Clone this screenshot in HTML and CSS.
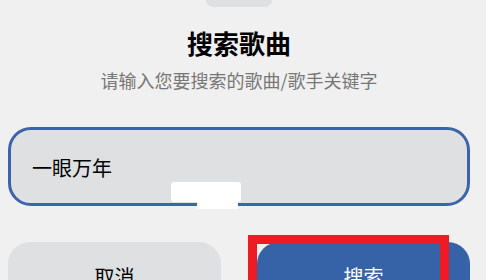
FILE: index.html
```html
<!DOCTYPE html>
<html lang="zh-CN">
<head>
  <meta charset="UTF-8">
  <meta name="viewport" content="width=device-width, initial-scale=1.0">
  <title>搜索歌曲</title>
  <link rel="stylesheet" href="styles.css">
</head>
<body>
  <div class="sheet">
    <div class="handle"></div>
    <h1 class="title">搜索歌曲</h1>
    <p class="hint">请输入您要搜索的歌曲/歌手关键字</p>

    <div class="field">
      <span class="field-text">一眼万年</span>
      <div class="blot blot-top"></div>
      <div class="blot blot-bottom"></div>
    </div>

    <div class="actions">
      <button class="btn btn-cancel">取消</button>
      <button class="btn btn-search">搜索</button>
      <div class="highlight"></div>
    </div>
  </div>
</body>
</html>
```

FILE: styles.css
```css
/* Reset styles */
* {
  margin: 0;
  padding: 0;
  box-sizing: border-box;
}

html, body {
  width: 486px;
  height: 280px;
  overflow: hidden;
}

body {
  font-family: "Noto Sans CJK SC", "Noto Sans", sans-serif;
  background-color: #f0f0f0;
  color: #000;
}

.sheet {
  width: 462px;
  margin-left: 8px;
}

.handle {
  width: 66px;
  height: 7px;
  margin: 0 auto;
  background-color: #dfe0e2;
  border-radius: 0 0 7px 7px;
}

.title {
  margin-top: 23px;
  font-size: 26px;
  line-height: 26px;
  font-weight: bold;
  text-align: center;
}

.hint {
  margin-top: 15px;
  font-size: 18px;
  line-height: 18px;
  color: #777;
  text-align: center;
}

.field {
  position: relative;
  display: flex;
  align-items: center;
  height: 79px;
  margin-top: 38px;
  padding-left: 21px;
  background-color: #dfe0e2;
  border: 3px solid #3b64a9;
  border-radius: 23px;
}

.field-text {
  font-size: 20px;
  line-height: 20px;
  margin-top: 2px;
}

/* white smudge over the bottom of the field */
.blot {
  position: absolute;
  background-color: #fff;
}

.blot-top {
  left: 160px;
  top: 52px;
  width: 70px;
  height: 20px;
  border-radius: 3px;
}

.blot-bottom {
  left: 186px;
  top: 69px;
  width: 41px;
  height: 10px;
}

.actions {
  position: relative;
  display: flex;
  gap: 36px;
  margin-top: 36px;
}

.btn {
  flex: 1;
  height: 80px;
  padding: 25px 0 35px;
  border: none;
  border-radius: 22px;
  font-family: inherit;
  font-size: 20px;
  line-height: 20px;
  text-align: center;
}

.btn-cancel {
  background-color: #dfe0e2;
  color: #000;
}

.btn-search {
  background-color: #3663a8;
  color: #fff;
}

.highlight {
  position: absolute;
  left: 240px;
  top: -7px;
  width: 201px;
  height: 90px;
  border: 9px solid #ed1c24;
}
```
